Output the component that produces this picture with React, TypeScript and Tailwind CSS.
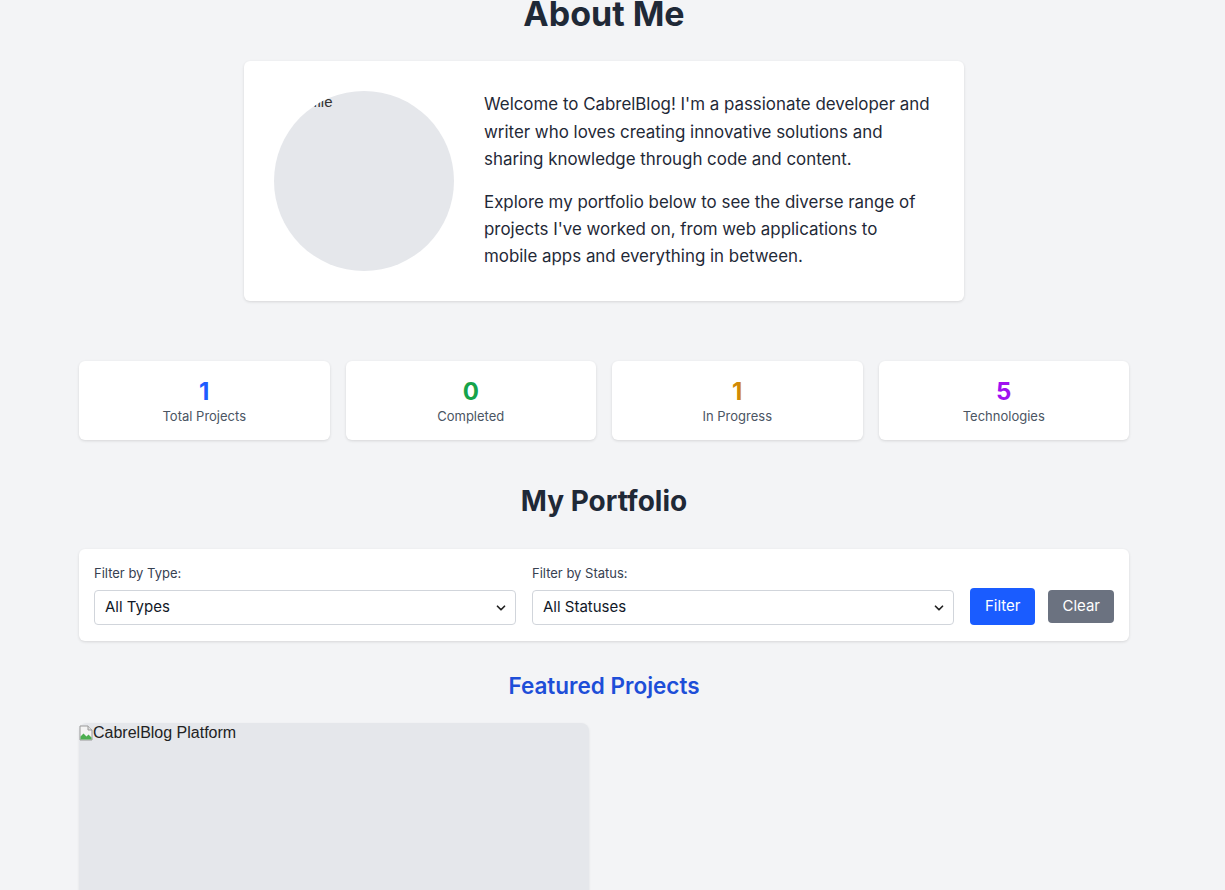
import { ChevronDown } from 'lucide-react';

const stats = [
    { value: '1', label: 'Total Projects', color: 'text-[#1d5cff]' },
    { value: '0', label: 'Completed', color: 'text-[#16a34a]' },
    { value: '1', label: 'In Progress', color: 'text-[#d18a06]' },
    { value: '5', label: 'Technologies', color: 'text-[#a011f0]' },
];

function BrokenImage() {
    return (
        <svg width="14" height="16" viewBox="0 0 14 16" className="shrink-0">
            <path d="M1 1h8l4 4v10H1z" fill="#f4f4f4" stroke="#9a9a9a" />
            <path d="M9 1v4h4" fill="#e0e0e0" stroke="#9a9a9a" />
            <path d="M1.5 14.5v-3l3-3 3 3 2-2 3 3v2z" fill="#4caf50" />
        </svg>
    );
}

function Select({ value }: { value: string }) {
    return (
        <div className="relative">
            <select
                defaultValue={value}
                className="w-full h-[35px] appearance-none border border-[#d1d5db] rounded bg-white pl-[10px] pr-8 text-[15px] text-[#111827]"
            >
                <option>{value}</option>
            </select>
            <ChevronDown
                size={14}
                strokeWidth={3}
                className="absolute right-[8px] top-[11px] text-[#222] pointer-events-none"
            />
        </div>
    );
}

export default function App() {
    return (
        <div className="min-h-screen bg-[#f3f4f6] font-['Inter',sans-serif] text-[#1f2937] pr-[17px] overflow-hidden">
            <div className="max-w-[1050px] mx-auto -mt-[6px]">
                <h1 className="text-[34px] font-bold text-center leading-10 text-[#1f2937]">
                    About Me
                </h1>

                <div className="max-w-[720px] mx-auto mt-[27px] bg-white rounded-md shadow-[0_1px_3px_rgba(0,0,0,0.12)] p-[30px] flex items-center gap-[30px]">
                    <div className="w-[180px] h-[180px] shrink-0 rounded-full bg-[#e5e7eb] overflow-hidden">
                        <div className="flex items-center font-['Liberation_Sans',sans-serif] text-[15px] text-[#333]">
                            <BrokenImage />
                            <span className="ml-[2px]">Profile</span>
                        </div>
                    </div>
                    <div className="w-[447px] text-[16.9px] leading-[27.2px] text-[#1f2937]">
                        <p className="mb-4">
                            Welcome to CabrelBlog! I'm a passionate developer and writer who loves creating
                            innovative solutions and sharing knowledge through code and content.
                        </p>
                        <p>
                            Explore my portfolio below to see the diverse range of projects I've worked on,
                            from web applications to mobile apps and everything in between.
                        </p>
                    </div>
                </div>

                <div className="grid grid-cols-4 gap-4 mt-[60px]">
                    {stats.map((s) => (
                        <div
                            key={s.label}
                            className="bg-white rounded-md shadow-[0_1px_3px_rgba(0,0,0,0.12)] pt-[17px] pb-[14px] text-center"
                        >
                            <div className={`text-2xl font-bold leading-[28px] ${s.color}`}>{s.value}</div>
                            <div className="text-[13px] leading-5 text-[#4b5563]">{s.label}</div>
                        </div>
                    ))}
                </div>

                <h2 className="text-[28px] font-bold text-center text-[#1f2937] mt-[43px] leading-9">
                    My Portfolio
                </h2>

                <div className="mt-[30px] bg-white rounded-md shadow-[0_1px_3px_rgba(0,0,0,0.12)] px-[15px] pt-[14px] pb-[16px] flex items-end gap-4">
                    <div className="flex-1">
                        <label className="block text-[13px] leading-5 text-[#374151] mb-[7px]">Filter by Type:</label>
                        <Select value="All Types" />
                    </div>
                    <div className="flex-1">
                        <label className="block text-[13px] leading-5 text-[#374151] mb-[7px]">Filter by Status:</label>
                        <Select value="All Statuses" />
                    </div>
                    <div className="flex items-center gap-[13px]">
                        <button className="h-[37px] px-[15px] rounded bg-[#1a5cff] text-white text-[15px]">
                            Filter
                        </button>
                        <button className="h-[33px] px-[14px] rounded bg-[#6b7280] text-white text-[15px]">
                            Clear
                        </button>
                    </div>
                </div>

                <h3 className="text-[22.5px] font-semibold text-center text-[#1d4ed8] mt-[29px] leading-8">
                    Featured Projects
                </h3>

                <div className="grid grid-cols-2 gap-[30px] mt-[21px]">
                    <div className="bg-[#e5e7eb] rounded-t-lg h-[400px] shadow-[0_1px_3px_rgba(0,0,0,0.08)]">
                        <div className="flex items-center pt-[1px] font-['Liberation_Sans',sans-serif] text-[16px] leading-[18px] text-[#222]">
                            <BrokenImage />
                            <span>CabrelBlog Platform</span>
                        </div>
                    </div>
                </div>
            </div>
        </div>
    );
}
